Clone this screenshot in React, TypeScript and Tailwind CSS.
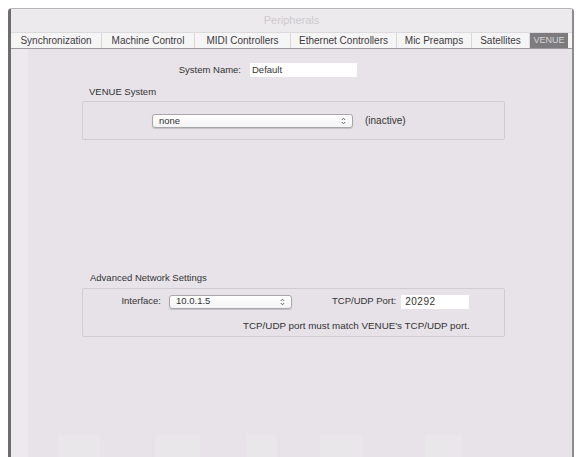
import React from "react";

const tabs = [
  { label: "Synchronization", w: "w-[91px]" },
  { label: "Machine Control", w: "w-[93px]" },
  { label: "MIDI Controllers", w: "w-[96px]" },
  { label: "Ethernet Controllers", w: "w-[106px]" },
  { label: "Mic Preamps", w: "w-[75px]" },
  { label: "Satellites", w: "w-[58px]" },
];

function Stepper() {
  return (
    <svg width="5" height="8" viewBox="0 0 5 8" className="shrink-0">
      <path d="M0.8 3 L2.5 1.2 L4.2 3" fill="none" stroke="#555" strokeWidth="0.9" />
      <path d="M0.8 5 L2.5 6.8 L4.2 5" fill="none" stroke="#555" strokeWidth="0.9" />
    </svg>
  );
}

function Popup({ value, className }: { value: string; className: string }) {
  return (
    <div
      className={`flex items-center justify-between h-[14px] pl-[6px] pr-[6px] rounded-[3px] border border-[#a9a6aa] bg-[linear-gradient(#ffffff,#f3f2f4)] shadow-[0_1px_1px_rgba(0,0,0,0.15)] ${className}`}
    >
      <span className="text-[9.5px] text-[#333]">{value}</span>
      <Stepper />
    </div>
  );
}

export default function App() {
  return (
    <div
      className="w-[579px] h-[457px] bg-white overflow-hidden"
      style={{ fontFamily: '"Liberation Sans", Arial, sans-serif' }}
    >
      <div className="ml-[8px] mt-[8px] w-[566px] h-[460px] flex flex-col border-t border-r-2 border-l-[3px] border-t-[#b5b3b6] border-r-[#8d8b8e] border-l-[#6e6c6f] rounded-t-[4px] bg-[linear-gradient(to_right,#eceaed_0px,#eceaed_17px,#e7e3e8_17px)]">
        {/* title bar */}
        <div className="h-[24px] flex items-center justify-center bg-[#eceaec] border-b border-[#dcdadc]">
          <span className="text-[11px] text-[#cdc9cd]">Peripherals</span>
        </div>

        {/* tabs */}
        <div className="h-[16px] flex bg-[#f6f5f6] border-b border-[#9c9a9d]">
          {tabs.map((t) => (
            <div
              key={t.label}
              className={`${t.w} h-full flex items-center justify-center border-r border-[#d9d7da] text-[10px] text-[#3c3a3d] whitespace-nowrap`}
            >
              {t.label}
            </div>
          ))}
          <div className="w-[38px] h-full flex items-center justify-center bg-[#7d7b7e] text-[9px] text-[#d8d6d9]">
            VENUE
          </div>
        </div>

        {/* content */}
        <div className="flex flex-col">
          <div className="flex items-center mt-[14px] h-[14px]">
            <span className="w-[230px] text-right text-[9.5px] text-[#333]">System Name:</span>
            <div className="ml-[9px] w-[107px] h-[14px] bg-white flex items-center pl-[2px] text-[9.5px] text-[#333]">
              Default
            </div>
          </div>

          <div className="ml-[78px] mt-[8px] text-[9.5px] text-[#333]">VENUE System</div>
          <div className="ml-[71px] mt-[2px] w-[423px] h-[39px] border border-[#d0ccd1] rounded-[2px] bg-[#e6e2e7] flex items-center">
            <Popup value="none" className="ml-[69px] w-[201px]" />
            <span className="ml-[12px] text-[10px] text-[#333]">(inactive)</span>
          </div>

          <div className="ml-[79px] mt-[131px] text-[9.5px] text-[#333]">Advanced Network Settings</div>
          <div className="ml-[71px] mt-[2px] w-[423px] h-[49px] border border-[#d0ccd1] rounded-[2px] bg-[#e6e2e7] flex flex-col">
            <div className="flex items-center mt-[6px] h-[14px]">
              <span className="w-[78px] text-right text-[9.5px] text-[#333]">Interface:</span>
              <Popup value="10.0.1.5" className="ml-[8px] w-[123px]" />
              <span className="ml-[40px] text-[9.5px] text-[#333]">TCP/UDP Port:</span>
              <div className="ml-[5px] w-[68px] h-[14px] bg-white flex items-center pl-[4px] text-[10px] tracking-[0.5px] text-[#333]">
                20292
              </div>
            </div>
            <div className="ml-[160px] mt-[10px] text-[9.8px] text-[#333] whitespace-nowrap">
              TCP/UDP port must match VENUE's TCP/UDP port.
            </div>
          </div>

          <div className="flex mt-[98px] ml-[47px]">
            <div className="w-[42px] h-[30px] bg-[#e9e7ea] rounded-t-[2px]" />
            <div className="ml-[55px] w-[45px] h-[30px] bg-[#e9e7ea] rounded-t-[2px]" />
            <div className="ml-[47px] w-[30px] h-[30px] bg-[#e9e7ea] rounded-t-[2px]" />
            <div className="ml-[43px] w-[42px] h-[30px] bg-[#e9e7ea] rounded-t-[2px]" />
            <div className="ml-[63px] w-[37px] h-[30px] bg-[#e9e7ea] rounded-t-[2px]" />
          </div>
        </div>
      </div>
    </div>
  );
}
